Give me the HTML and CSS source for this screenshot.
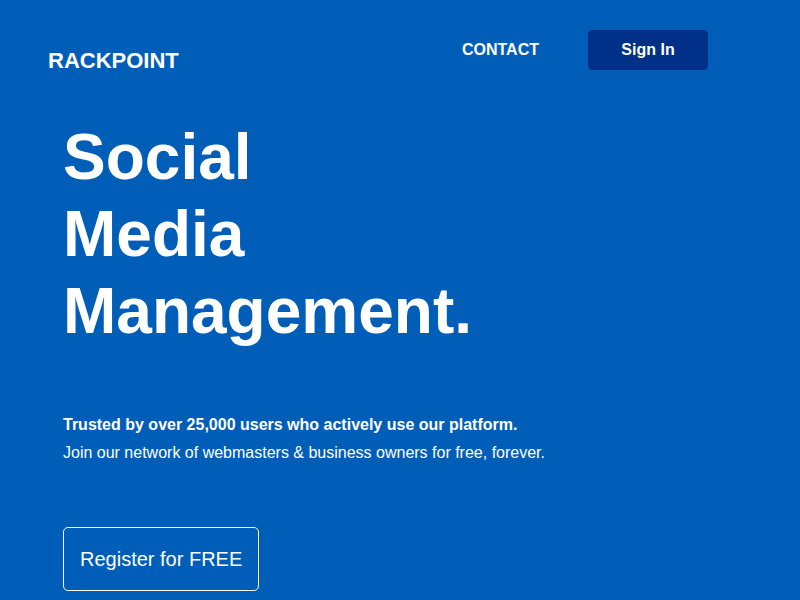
FILE: index.html
```html
<!DOCTYPE html>
<html lang="en">
<head>
    <meta charset="UTF-8" />
    <meta name="viewport" content="width=device-width, initial-scale=1" />
    <title>Rackpoint</title>
    <link rel="stylesheet" href="styles.css">
</head>
<body>

<div class="page">
    <!-- top bar -->
    <header class="topbar">
        <div class="logo">RACKPOINT</div>
        <nav class="nav">
            <a href="#" class="nav-link">CONTACT</a>
            <a href="#" class="signin">Sign In</a>
        </nav>
    </header>

    <!-- hero -->
    <section class="hero">
        <h1>Social<br>Media<br>Management.</h1>

        <div class="intro">
            <p class="intro-strong">Trusted by over 25,000 users who actively use our platform.</p>
            <p>Join our network of webmasters &amp; business owners for free, forever.</p>
        </div>

        <a href="#" class="register">Register for FREE</a>
    </section>
</div>

</body>
</html>
```

FILE: styles.css
```css
body {
    font-family: "Liberation Sans", Arial, sans-serif;
    background-color: #005eb8;
    color: #fff;
    margin: 0;
}
a {
    color: #fff;
    text-decoration: none;
}
.page {
    min-height: 7400px;
}

/* top bar */
.topbar {
    display: flex;
    justify-content: space-between;
    align-items: flex-start;
    padding: 30px 92px 0 48px;
}
.logo {
    margin-top: 18px;
    font-size: 22px;
    font-weight: bold;
}
.nav {
    display: flex;
    align-items: center;
    gap: 49px;
}
.nav-link {
    font-size: 16px;
    font-weight: bold;
}
.signin {
    width: 120px;
    padding: 11px 0;
    text-align: center;
    font-size: 16px;
    font-weight: bold;
    background-color: #003087;
    border-radius: 4px;
}

/* hero */
.hero {
    padding: 45px 63px 0;
}
h1 {
    margin: 0;
    font-size: 64px;
    line-height: 1.2;
    font-weight: bold;
}
.intro {
    margin-top: 62px;
    font-size: 16px;
    line-height: 28px;
}
.intro p {
    margin: 0;
}
.intro-strong {
    font-weight: bold;
}
.register {
    display: inline-block;
    margin-top: 60px;
    padding: 19px 16px;
    font-size: 20px;
    line-height: 24px;
    border: 1px solid #fff;
    border-radius: 5px;
}
```
